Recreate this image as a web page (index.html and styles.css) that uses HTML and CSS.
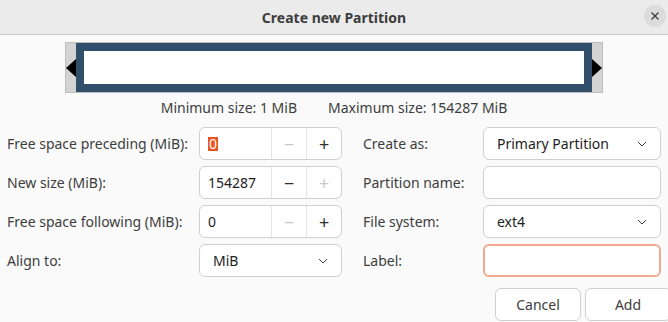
FILE: index.html
```html
<!DOCTYPE html>
<html lang="en">
<head>
    <meta charset="UTF-8">
    <title>Create new Partition</title>
    <link rel="stylesheet" href="styles.css">
</head>
<body>

    <div class="dialog">
        <!-- Title bar -->
        <header class="titlebar">
            <span class="title">Create new Partition</span>
            <button class="close" aria-label="Close">
                <svg width="10" height="10" viewBox="0 0 10 10">
                    <path d="M1.5 1.5 L8.5 8.5 M8.5 1.5 L1.5 8.5" stroke="#3d3d3d" stroke-width="1.3" fill="none"/>
                </svg>
            </button>
        </header>

        <div class="content">
            <!-- Partition map -->
            <div class="partmap">
                <span class="arrow arrow-left"></span>
                <div class="part"><div class="part-inner"></div></div>
                <span class="arrow arrow-right"></span>
            </div>

            <div class="sizes">
                <span>Minimum size: 1 MiB</span>
                <span>Maximum size: 154287 MiB</span>
            </div>

            <!-- Form -->
            <div class="form">
                <label class="lbl">Free space preceding (MiB):</label>
                <div class="spin">
                    <span class="spin-text"><span class="selected">0</span></span>
                    <span class="spin-btn disabled">&minus;</span>
                    <span class="spin-btn">+</span>
                </div>
                <label class="lbl lbl-right">Create as:</label>
                <div class="combo"><span>Primary Partition</span><svg class="chev" width="10" height="6" viewBox="0 0 10 6"><path d="M1 1 L5 5 L9 1" stroke="#3d3d3d" stroke-width="1" fill="none"/></svg></div>

                <label class="lbl">New size (MiB):</label>
                <div class="spin">
                    <span class="spin-text">154287</span>
                    <span class="spin-btn">&minus;</span>
                    <span class="spin-btn disabled">+</span>
                </div>
                <label class="lbl lbl-right">Partition name:</label>
                <div class="entry"></div>

                <label class="lbl">Free space following (MiB):</label>
                <div class="spin">
                    <span class="spin-text">0</span>
                    <span class="spin-btn disabled">&minus;</span>
                    <span class="spin-btn">+</span>
                </div>
                <label class="lbl lbl-right">File system:</label>
                <div class="combo"><span>ext4</span><svg class="chev" width="10" height="6" viewBox="0 0 10 6"><path d="M1 1 L5 5 L9 1" stroke="#3d3d3d" stroke-width="1" fill="none"/></svg></div>

                <label class="lbl">Align to:</label>
                <div class="combo"><span>MiB</span><svg class="chev" width="10" height="6" viewBox="0 0 10 6"><path d="M1 1 L5 5 L9 1" stroke="#3d3d3d" stroke-width="1" fill="none"/></svg></div>
                <label class="lbl lbl-right">Label:</label>
                <div class="entry focused"></div>
            </div>

            <!-- Buttons -->
            <div class="actions">
                <button class="btn">Cancel</button>
                <button class="btn">Add</button>
            </div>
        </div>
    </div>

</body>
</html>
```

FILE: styles.css
```css
/* General */
body {
    margin: 0;
    padding: 0;
    width: 668px;
    height: 322px;
    overflow: hidden;
    background: #fafafa;
    font-family: "Noto Sans", "Open Sans", sans-serif;
    font-size: 14px;
    color: #3d3d3d;
}
.dialog {
    width: 668px;
}
/* Title bar */
.titlebar {
    height: 34px;
    background: #ebebeb;
    border-bottom: 1px solid #c8c8c8;
    display: flex;
    align-items: center;
    justify-content: center;
    position: relative;
}
.title {
    font-weight: bold;
    font-size: 14px;
    color: #3d3d3d;
}
.close {
    position: absolute;
    right: 2px;
    top: 5px;
    width: 22px;
    height: 22px;
    border-radius: 50%;
    border: none;
    background: #dcdcdc;
    padding: 0;
    display: flex;
    align-items: center;
    justify-content: center;
}
/* Content */
.content {
    padding-top: 7px;
}
.partmap {
    width: 536px;
    height: 49px;
    margin: 0 auto;
    background: #d3d3d3;
    border: 1px solid #bdbdbd;
    display: flex;
    align-items: center;
}
.arrow {
    width: 0;
    height: 0;
    border-top: 9px solid transparent;
    border-bottom: 9px solid transparent;
}
.arrow-left {
    border-right: 10px solid #000;
}
.arrow-right {
    border-left: 10px solid #000;
}
.part {
    flex: 1;
    align-self: stretch;
    background: #314e6b;
    padding: 8px;
    display: flex;
}
.part-inner {
    flex: 1;
    background: #fff;
}
.sizes {
    display: flex;
    justify-content: center;
    gap: 31px;
    margin-top: 4px;
    height: 22px;
    line-height: 22px;
}
/* Form grid */
.form {
    display: grid;
    grid-template-columns: 192px 143px 141px 178px;
    grid-auto-rows: 33px;
    row-gap: 6px;
    padding-left: 7px;
    margin-top: 8px;
    align-items: center;
}
.lbl {
    white-space: nowrap;
}
.lbl-right {
    padding-left: 21px;
}
.form .spin, .form .combo, .form .entry {
    height: 33px;
    box-sizing: border-box;
}
.spin {
    display: flex;
    background: #fff;
    border: 1px solid #cfcfcf;
    border-radius: 6px;
    color: #1e1e1e;
}
.spin-text {
    width: 73px;
    padding-left: 8px;
    display: flex;
    align-items: center;
    box-sizing: border-box;
}
.selected {
    background: #e95420;
    color: #fff;
    line-height: 14px;
    padding: 0 1px;
}
.spin-btn {
    width: 35px;
    border-left: 1px solid #e4e4e4;
    display: flex;
    align-items: center;
    justify-content: center;
    font-size: 18px;
    color: #2e2e2e;
}
.spin-btn.disabled {
    color: #c9c9c9;
}
.combo {
    display: flex;
    align-items: center;
    justify-content: space-between;
    background: #fff;
    border: 1px solid #cfcfcf;
    border-radius: 6px;
    padding: 0 13px;
    color: #1e1e1e;
}
.entry {
    background: #fff;
    border: 1px solid #cfcfcf;
    border-radius: 6px;
}
.entry.focused {
    border: 2px solid #f3a98e;
}
/* Buttons */
.actions {
    display: flex;
    gap: 4px;
    margin-top: 11px;
    margin-left: 495px;
}
.btn {
    width: 86px;
    flex-shrink: 0;
    height: 33px;
    background: #fff;
    border: 1px solid #cfcfcf;
    border-radius: 6px;
    font-family: "Noto Sans", "Open Sans", sans-serif;
    font-size: 14px;
    color: #3d3d3d;
    padding: 0;
}
```
